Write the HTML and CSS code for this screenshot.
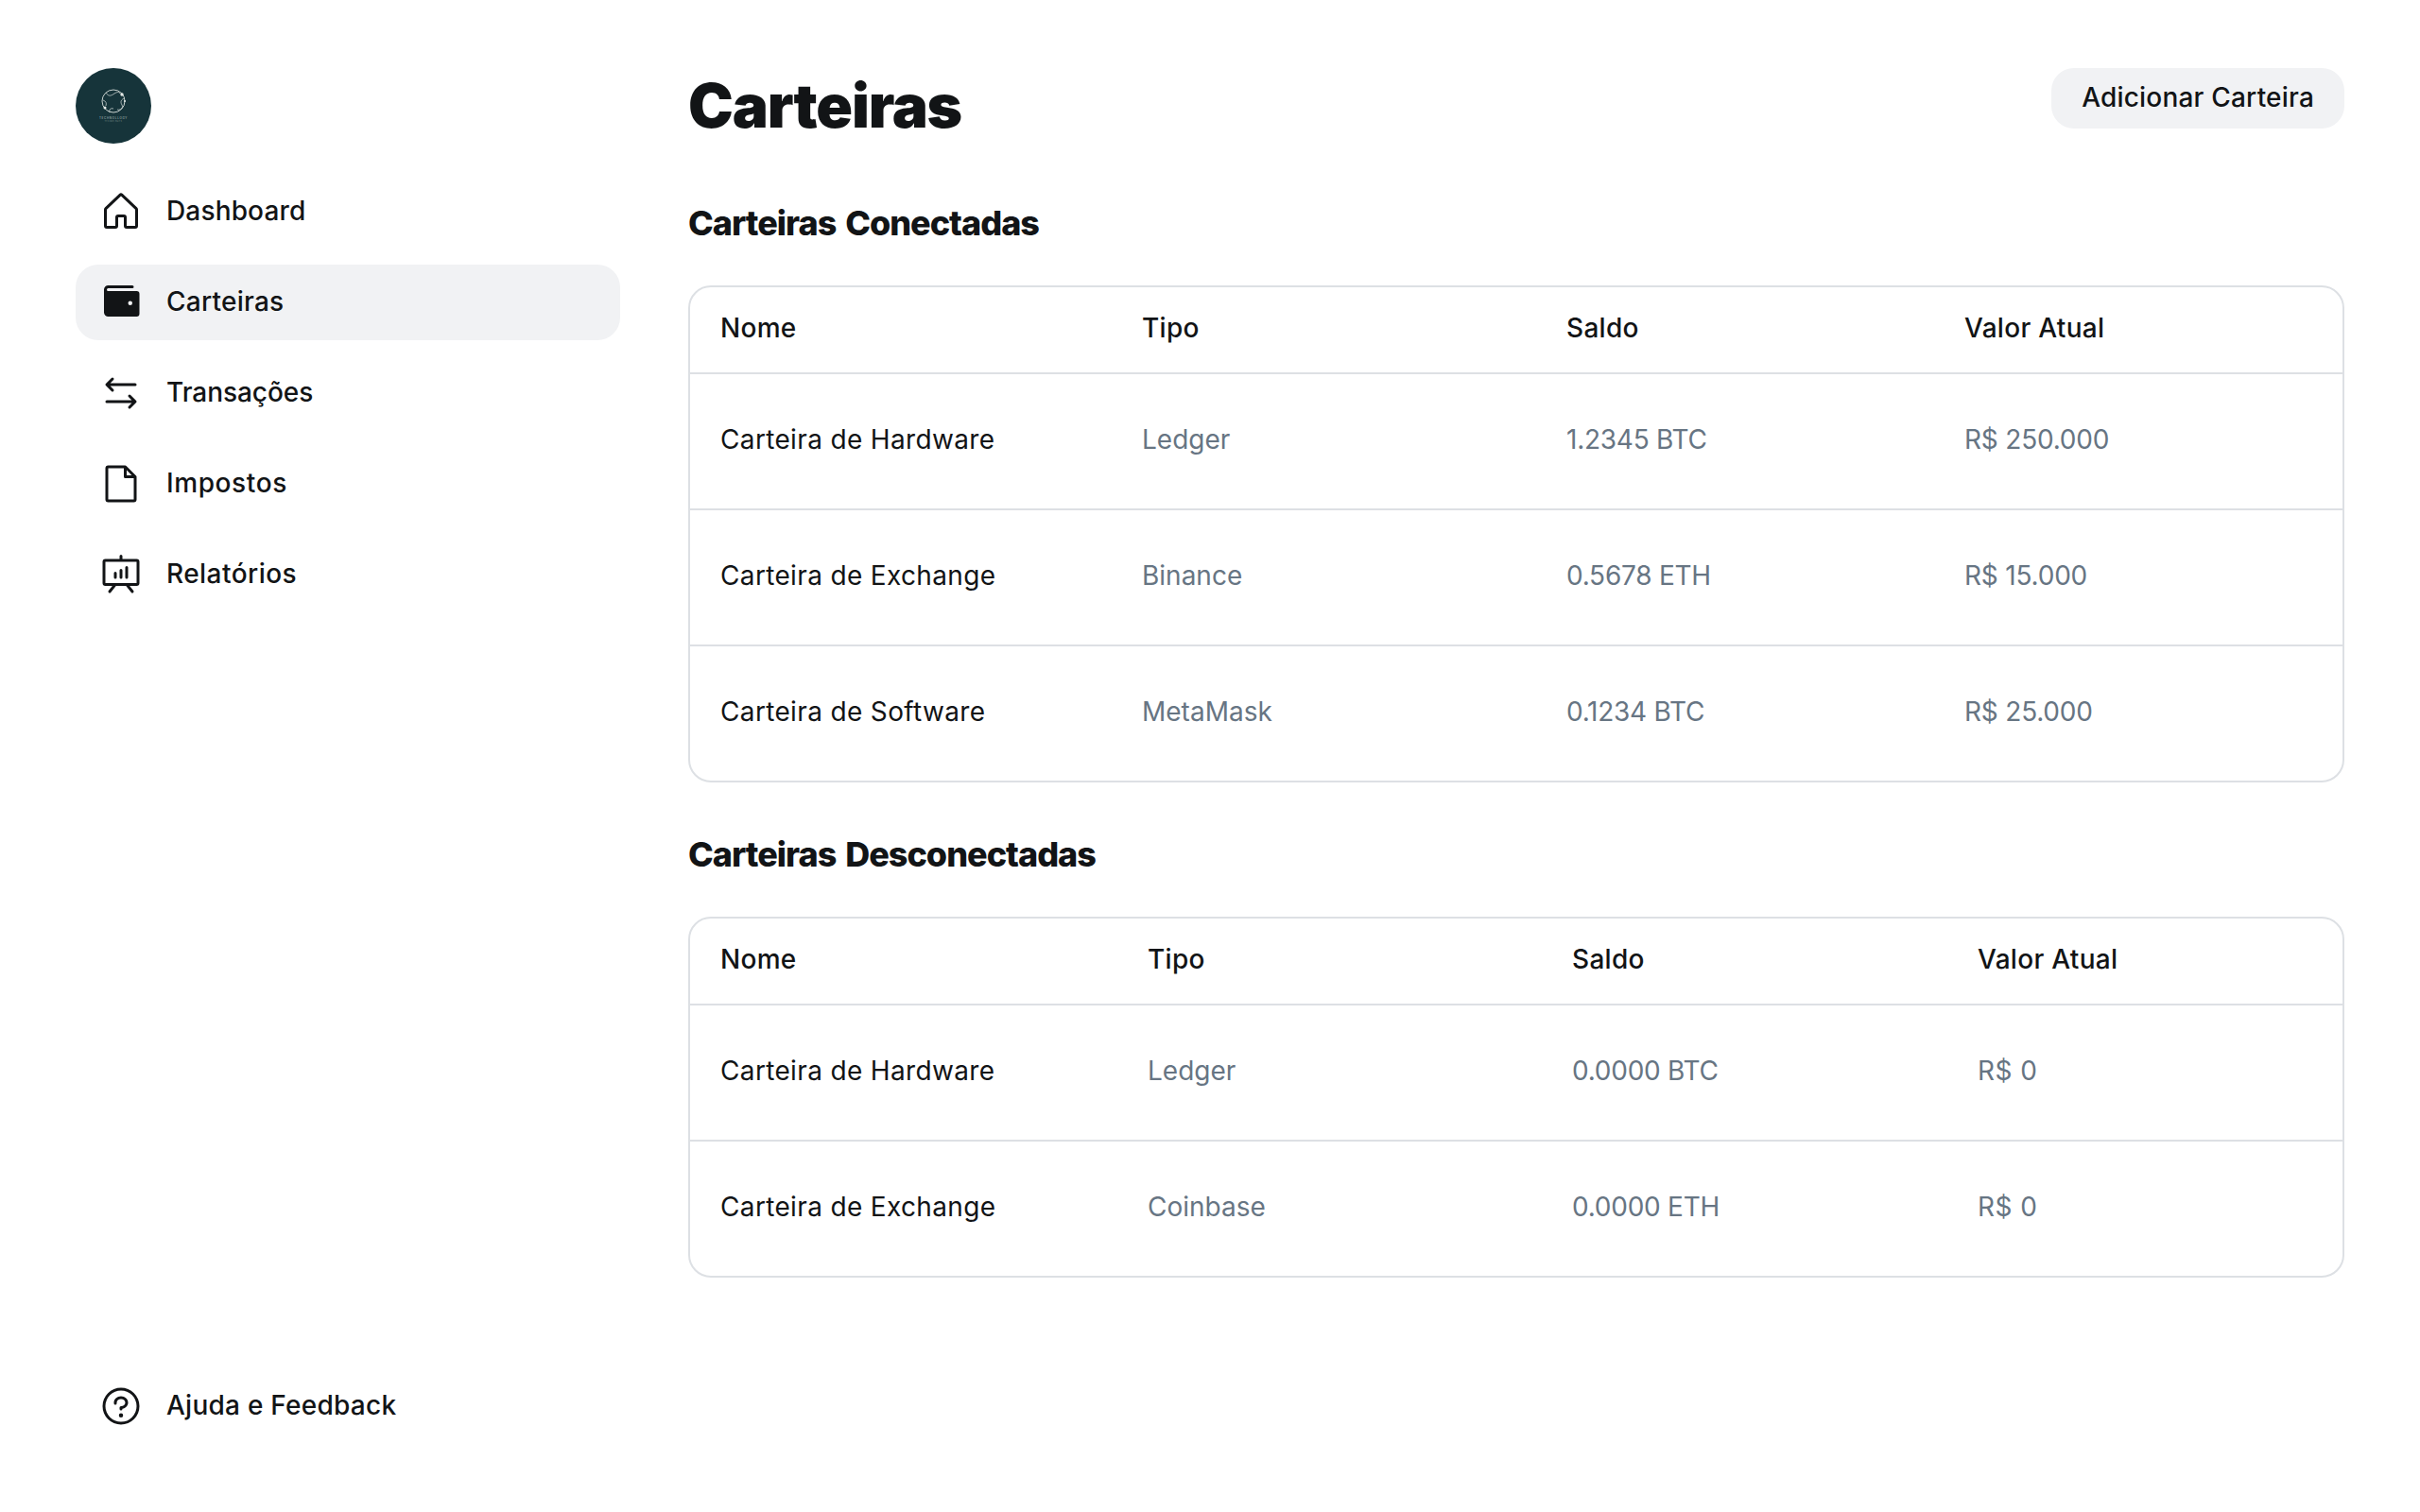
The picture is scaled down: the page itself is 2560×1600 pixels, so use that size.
FILE: index.html
```html
<!DOCTYPE html>
<html lang="pt">
<head>
<meta charset="utf-8">
<title>Carteiras</title>
<link rel="stylesheet" href="styles.css">
</head>
<body>
<div class="app">
  <aside class="sidebar">
    <div class="top">
      <svg class="logo" viewBox="0 0 80 80" role="img" aria-label="Logo">
        <circle cx="40" cy="40" r="40" fill="#16343a"/>
        <circle cx="40" cy="35" r="12" fill="none" stroke="#d9e0dc" stroke-width=".9"/>
        <path d="M32 26c3 5 6 3 9 1s5-2 6 0M52 32c-4 1-5 4-3 7s-2 6-5 5M36 47c-1-3 1-5 4-4M29 34c3 1 4 3 3 6" fill="none" stroke="#d9e0dc" stroke-width=".7"/>
        <circle cx="49" cy="28" r="1.7" fill="#e6ebe8"/><circle cx="31" cy="42" r="1.5" fill="#e6ebe8"/><circle cx="52" cy="35" r="1" fill="#e6ebe8"/>
        <text class="logo-a" x="40" y="53.5" text-anchor="middle">TECHNOLLOGY</text>
        <text class="logo-b" x="40" y="56.5" text-anchor="middle">TECHNOLOGIES</text>
      </svg>
      <nav class="nav">
        <a class="item"><svg class="icon" viewBox="0 0 256 256"><path d="M218.83,103.77l-80-75.48a1.14,1.14,0,0,1-.11-.11,16,16,0,0,0-21.53,0l-.11.11L37.17,103.77A16,16,0,0,0,32,115.55V208a16,16,0,0,0,16,16H96a16,16,0,0,0,16-16V160h32v48a16,16,0,0,0,16,16h48a16,16,0,0,0,16-16V115.55A16,16,0,0,0,218.83,103.77ZM208,208H160V160a16,16,0,0,0-16-16H112a16,16,0,0,0-16,16v48H48V115.55l.11-.1L128,40l79.9,75.43.11.1Z"/></svg><span>Dashboard</span></a>
        <a class="item active"><svg class="icon" viewBox="0 0 256 256"><path d="M216,64H56a8,8,0,0,1,0-16H192a8,8,0,0,0,0-16H56A24,24,0,0,0,32,56V184a24,24,0,0,0,24,24H216a16,16,0,0,0,16-16V80A16,16,0,0,0,216,64Zm-36,80a12,12,0,1,1,12-12A12,12,0,0,1,180,144Z"/></svg><span>Carteiras</span></a>
        <a class="item"><svg class="icon" viewBox="0 0 256 256"><path d="M213.66,181.66l-32,32a8,8,0,0,1-11.32-11.32L188.69,184H48a8,8,0,0,1,0-16H188.69l-18.35-18.34a8,8,0,0,1,11.32-11.32l32,32A8,8,0,0,1,213.66,181.66Zm-139.32-64a8,8,0,0,0,11.32-11.32L67.31,88H208a8,8,0,0,0,0-16H67.31L85.66,53.66A8,8,0,0,0,74.34,42.34l-32,32a8,8,0,0,0,0,11.32Z"/></svg><span>Transações</span></a>
        <a class="item"><svg class="icon" viewBox="0 0 256 256"><path d="M213.66,82.34l-56-56A8,8,0,0,0,152,24H56A16,16,0,0,0,40,40V216a16,16,0,0,0,16,16H200a16,16,0,0,0,16-16V88A8,8,0,0,0,213.66,82.34ZM160,51.31,188.69,80H160ZM200,216H56V40h88V88a8,8,0,0,0,8,8h48V216Z"/></svg><span>Impostos</span></a>
        <a class="item"><svg class="icon" viewBox="0 0 256 256"><path d="M216,40H136V24a8,8,0,0,0-16,0V40H40A16,16,0,0,0,24,56V176a16,16,0,0,0,16,16H79.36L57.75,219a8,8,0,0,0,12.5,10l29.59-37h56.32l29.59,37a8,8,0,1,0,12.5-10l-21.61-27H216a16,16,0,0,0,16-16V56A16,16,0,0,0,216,40Zm0,136H40V56H216V176ZM104,120v24a8,8,0,0,1-16,0V120a8,8,0,0,1,16,0Zm32-16v40a8,8,0,0,1-16,0V104a8,8,0,0,1,16,0Zm32-16v56a8,8,0,0,1-16,0V88a8,8,0,0,1,16,0Z"/></svg><span>Relatórios</span></a>
      </nav>
    </div>
    <a class="item"><svg class="icon" viewBox="0 0 256 256"><path d="M140,180a12,12,0,1,1-12-12A12,12,0,0,1,140,180ZM128,72c-22.06,0-40,16.15-40,36v4a8,8,0,0,0,16,0v-4c0-11,10.77-20,24-20s24,9,24,20-10.77,20-24,20a8,8,0,0,0-8,8v8a8,8,0,0,0,16,0v-.72c18.24-3.35,32-17.9,32-35.28C168,88.15,150.06,72,128,72Zm104,56A104,104,0,1,1,128,24,104.11,104.11,0,0,1,232,128Zm-16,0a88,88,0,1,0-88,88A88.1,88.1,0,0,0,216,128Z"/></svg><span>Ajuda e Feedback</span></a>
  </aside>
  <main class="main">
    <header class="head">
      <h1>Carteiras</h1>
      <button class="btn">Adicionar Carteira</button>
    </header>
    <h2 class="sec">Carteiras Conectadas</h2>
    <div class="card">
      <table class="tbl t1">
        <thead><tr><th>Nome</th><th>Tipo</th><th>Saldo</th><th>Valor Atual</th></tr></thead>
        <tbody>
          <tr><td>Carteira de Hardware</td><td>Ledger</td><td>1.2345 BTC</td><td>R$ 250.000</td></tr>
          <tr><td>Carteira de Exchange</td><td>Binance</td><td>0.5678 ETH</td><td>R$ 15.000</td></tr>
          <tr><td>Carteira de Software</td><td>MetaMask</td><td>0.1234 BTC</td><td>R$ 25.000</td></tr>
        </tbody>
      </table>
    </div>
    <h2 class="sec">Carteiras Desconectadas</h2>
    <div class="card">
      <table class="tbl t2">
        <thead><tr><th>Nome</th><th>Tipo</th><th>Saldo</th><th>Valor Atual</th></tr></thead>
        <tbody>
          <tr><td>Carteira de Hardware</td><td>Ledger</td><td>0.0000 BTC</td><td>R$ 0</td></tr>
          <tr><td>Carteira de Exchange</td><td>Coinbase</td><td>0.0000 ETH</td><td>R$ 0</td></tr>
        </tbody>
      </table>
    </div>
  </main>
</div>
</body>
</html>
```
FILE: styles.css
```css
* { box-sizing: border-box; }
html, body { margin: 0; height: 100%; background: #fff; }
body { font-family: "Inter", "Noto Sans", sans-serif; color: #121416; }
.app { display: flex; gap: 72px; height: 1600px; padding: 40px 80px 0; }
.sidebar { width: 576px; flex: none; display: flex; flex-direction: column; justify-content: space-between; padding: 32px 0 72px; }
.top { display: flex; flex-direction: column; gap: 32px; }
.logo { width: 80px; height: 80px; display: block; }
.logo-a { font: 3px "Inter", sans-serif; letter-spacing: .7px; fill: #b8c4c2; }
.logo-b { font: 1.6px "Inter", sans-serif; letter-spacing: .5px; fill: #8fa09e; }
.nav { display: flex; flex-direction: column; gap: 16px; }
.item { display: flex; align-items: center; gap: 24px; height: 80px; padding: 0 24px; border-radius: 24px; font-size: 28px; font-weight: 500; letter-spacing: .25px; }
.item span { padding-bottom: 2px; }
.nav .item:nth-child(1) { letter-spacing: .15px; }
.nav .item:nth-child(3) { letter-spacing: -.05px; }
.nav .item:nth-child(4) { letter-spacing: .6px; }
.nav .item:nth-child(5) { letter-spacing: .45px; }
.item.active { background: #f1f2f4; }
.icon { width: 48px; height: 48px; fill: #121416; flex: none; }
.main { flex: 1; min-width: 0; padding-top: 32px; }
.head { display: flex; justify-content: space-between; align-items: flex-start; margin-bottom: 8px; }
h1 { margin: 0; font-size: 64px; line-height: 80px; font-weight: 900; letter-spacing: -1.2px; }
.btn { height: 64px; padding: 0 32px 2px; border: 0; border-radius: 24px; background: #f1f2f4; color: #121416; font: 500 28px "Inter", sans-serif; letter-spacing: .2px; }
.sec { margin: 0; padding: 50px 0 40px; font-size: 36px; line-height: 52px; font-weight: 800; letter-spacing: -1px; word-spacing: 3px; }
.card { border: 2px solid #dde0e4; border-radius: 24px; overflow: hidden; }
.tbl { width: 100%; border-collapse: separate; border-spacing: 0; table-layout: fixed; font-size: 28px; }
.tbl th { height: 90px; padding: 0 32px 4px; text-align: left; font-weight: 500; letter-spacing: .3px; }
.tbl td { height: 144px; padding: 0 32px 4px; border-top: 2px solid #dde0e4; color: #677583; }
.tbl td:nth-child(1) { color: #121416; letter-spacing: .35px; }
.tbl td:nth-child(2) { letter-spacing: 0; }
.tbl td:nth-child(3) { letter-spacing: -.25px; }
.tbl td:nth-child(4) { letter-spacing: -.2px; }
.t2 td:nth-child(4) { letter-spacing: .5px; }
.t1 th:nth-child(1) { width: 446px; }
.t1 th:nth-child(2) { width: 449px; }
.t1 th:nth-child(3) { width: 421px; }
.t2 th:nth-child(1) { width: 452px; }
.t2 th:nth-child(2) { width: 449px; }
.t2 th:nth-child(3) { width: 429px; }
```
